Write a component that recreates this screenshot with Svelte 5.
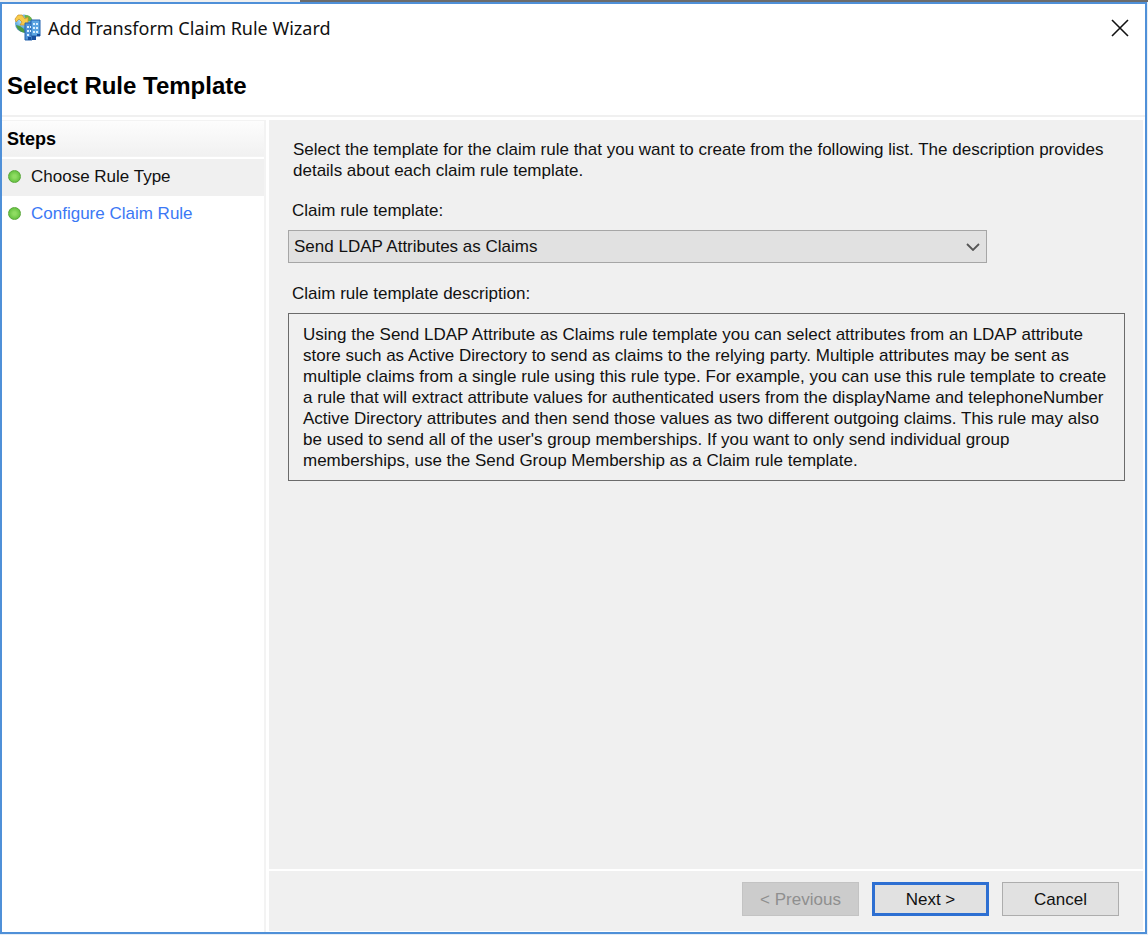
<script>
  const templates = [
    {
      name: 'Send LDAP Attributes as Claims',
      lines: [
        'Using the Send LDAP Attribute as Claims rule template you can select attributes from an LDAP attribute',
        'store such as Active Directory to send as claims to the relying party. Multiple attributes may be sent as',
        'multiple claims from a single rule using this rule type. For example, you can use this rule template to create',
        'a rule that will extract attribute values for authenticated users from the displayName and telephoneNumber',
        'Active Directory attributes and then send those values as two different outgoing claims. This rule may also',
        "be used to send all of the user's group memberships. If you want to only send individual group",
        'memberships, use the Send Group Membership as a Claim rule template.',
      ],
    },
  ]

  const steps = ['Choose Rule Type', 'Configure Claim Rule']

  let selected = $state(0)
  let current = $state(0)
</script>

<div class="desktop">
  <main class="window">
    <header class="titlebar">
      <svg class="app-icon" viewBox="0 0 28 28" aria-hidden="true">
        <defs>
          <radialGradient id="globe" cx="0.4" cy="0.35" r="0.7">
            <stop offset="0" stop-color="#c4ecfa" />
            <stop offset="0.6" stop-color="#5aa5dc" />
            <stop offset="1" stop-color="#2a62ad" />
          </radialGradient>
        </defs>
        <circle cx="10" cy="9.5" r="9" fill="url(#globe)" />
        <path d="M11 1c5 0 7 3 7.500 6l-4 0-4-4z" fill="#6fb545" />
        <path d="M2 11l4 1 4 3 1 4c-5-1-8-4-9-8z" fill="#4c9c40" />
        <path d="M1 5l3-4 4 0 3 4 3-2 0 8-8 0 2-3-3-3-3 3z" fill="#f8cb4a" stroke="#c98f26" stroke-width="0.7" />
        <path d="M11 9h7v17h-7z" fill="#4f94d8" stroke="#2563ad" />
        <path d="M17 6h9v16h-9z" fill="#5ba5e2" stroke="#2563ad" />
        <path d="M13 12h2v2h-2zM16 12h1v2h-1zM13 16h2v2h-2zM16 16h1v2h-1zM13 20h2v2h-2zM19 9h2v2h-2zM22 9h2v2h-2zM19 13h2v2h-2zM22 13h2v2h-2zM19 17h2v2h-2zM22 17h2v2h-2z" fill="#d8efff" />
        <path d="M14 23h3v3h-3zM18 22h4v4h-4zM23 20h3v2h-3z" fill="#174f9f" />
      </svg>
      <span class="title">Add Transform Claim Rule Wizard</span>
      <button class="close" type="button" aria-label="Close">
        <svg viewBox="0 0 18 18" aria-hidden="true">
          <path d="M1 1L17 17M17 1L1 17" stroke="#111" stroke-width="1.6" />
        </svg>
      </button>
    </header>

    <h1>Select Rule Template</h1>

    <div class="body">
      <nav class="steps">
        <h2>Steps</h2>
        <ol>
          {#each steps as step, i}
            <li class:current={i === current}>
              <span class="dot"></span>
              {#if i === current}
                <span>{step}</span>
              {:else}
                <a href="#step-{i + 1}">{step}</a>
              {/if}
            </li>
          {/each}
        </ol>
      </nav>

      <section class="panel">
        <div class="content">
          <p class="intro">
            Select the template for the claim rule that you want to create from the following list. The description provides
            details about each claim rule template.
          </p>

          <label for="template">Claim rule template:</label>
          <div class="select">
            <select id="template" bind:value={selected}>
              {#each templates as template, i}
                <option value={i}>{template.name}</option>
              {/each}
            </select>
            <svg viewBox="0 0 14 8" aria-hidden="true">
              <path d="M1 1L7 7L13 1" fill="none" stroke="#555" stroke-width="1.8" />
            </svg>
          </div>

          <h3>Claim rule template description:</h3>
          <div class="description">
            {#each templates[selected].lines as line}
              <div>{line}</div>
            {/each}
          </div>
        </div>

        <footer>
          <button type="button" disabled={current === 0}>&lt; Previous</button>
          <button class="default" type="button">Next &gt;</button>
          <button type="button">Cancel</button>
        </footer>
      </section>
    </div>
  </main>
</div>

<style>
  :global(body) {
    margin: 0;
  }

  .desktop {
    box-sizing: border-box;
    min-height: 100vh;
    padding: 2px 1px 1px 0;
    display: flex;
    background: linear-gradient(90deg, #f0f0f0 300px, #6b6b6b 300px) top / 100% 2px no-repeat #e6eef6;
    font-family: 'Liberation Sans', Arial, sans-serif;
    font-size: 17px;
    line-height: 21px;
    color: #111;
  }

  .window {
    flex: 1;
    min-width: 0;
    display: flex;
    flex-direction: column;
    border: 2px solid #4f90d8;
    background: #fff;
  }

  .titlebar {
    display: flex;
    align-items: center;
    height: 48px;
    padding: 0 16px 0 12px;
  }

  .app-icon {
    width: 28px;
    height: 28px;
    margin-right: 6px;
  }

  .title {
    flex: 1;
    font-family: 'Noto Sans', sans-serif;
    font-size: 18px;
  }

  .close {
    display: flex;
    min-width: 0;
    height: auto;
    padding: 0;
    border: 0;
    background: none;
  }

  .close svg {
    width: 18px;
    height: 18px;
  }

  h1 {
    margin: 0;
    padding: 21px 5px 16px;
    border-bottom: 2px solid #f0f0f0;
    font-size: 24px;
    line-height: 26px;
    color: #000;
  }

  .body {
    flex: 1;
    display: flex;
    padding-top: 3px;
  }

  .steps {
    box-sizing: border-box;
    width: 264px;
    border-right: 2px solid #f3f3f3;
  }

  h2 {
    margin: 0 0 2px;
    padding: 8px 5px 7px;
    border: 1px solid #f3f3f3;
    border-width: 1px 0;
    background: linear-gradient(#fdfdfd, #f1f1f1);
    font-size: 18px;
    line-height: 20px;
    color: #000;
  }

  ol {
    margin: 0;
    padding: 0;
    list-style: none;
  }

  li {
    box-sizing: border-box;
    display: flex;
    align-items: center;
    gap: 10px;
    height: 37px;
    padding: 0 0 3px 6px;
  }

  .current {
    background: #f0f0f0;
  }

  .dot {
    box-sizing: border-box;
    width: 13px;
    height: 13px;
    border: 1px solid #5aa83a;
    border-radius: 50%;
    background: radial-gradient(#8fdc62 20%, #52b531);
  }

  a {
    color: #3b78f5;
    text-decoration: none;
  }

  .panel {
    flex: 1;
    min-width: 0;
    display: flex;
    flex-direction: column;
    margin: 0 2px 1px 3px;
    background: #f0f0f0;
  }

  .content {
    flex: 1;
    padding: 19px 18px 0 19px;
  }

  .intro {
    margin: 0 0 19px 5px;
  }

  label,
  h3 {
    display: block;
    margin: 0 0 9px 4px;
    font-size: 17px;
    font-weight: normal;
  }

  .select {
    display: grid;
    align-items: center;
    width: calc(100% - 138px);
    margin-bottom: 20px;
  }

  .select > * {
    grid-area: 1 / 1;
  }

  .select svg {
    justify-self: end;
    width: 14px;
    height: 8px;
    margin-right: 7px;
    pointer-events: none;
  }

  select {
    width: 100%;
    height: 33px;
    padding: 0 5px;
    appearance: none;
    border: 1px solid #a6a6a6;
    border-radius: 0;
    background: #e1e1e1;
    font: inherit;
    color: inherit;
  }

  .description {
    padding: 10px 14px 9px;
    border: 1px solid #6b6b6b;
  }

  footer {
    display: flex;
    justify-content: flex-end;
    gap: 13px;
    padding: 11px 24px 15px;
    border-top: 2px solid #fff;
  }

  button {
    box-sizing: border-box;
    min-width: 117px;
    height: 34px;
    border: 1px solid #adadad;
    background: #e1e1e1;
    font: inherit;
    color: inherit;
  }

  button:disabled {
    border-color: #c3c3c3;
    background: #cccccc;
    color: #8f8f8f;
  }

  .default {
    border: 3px solid #2d6fd2;
  }
</style>
